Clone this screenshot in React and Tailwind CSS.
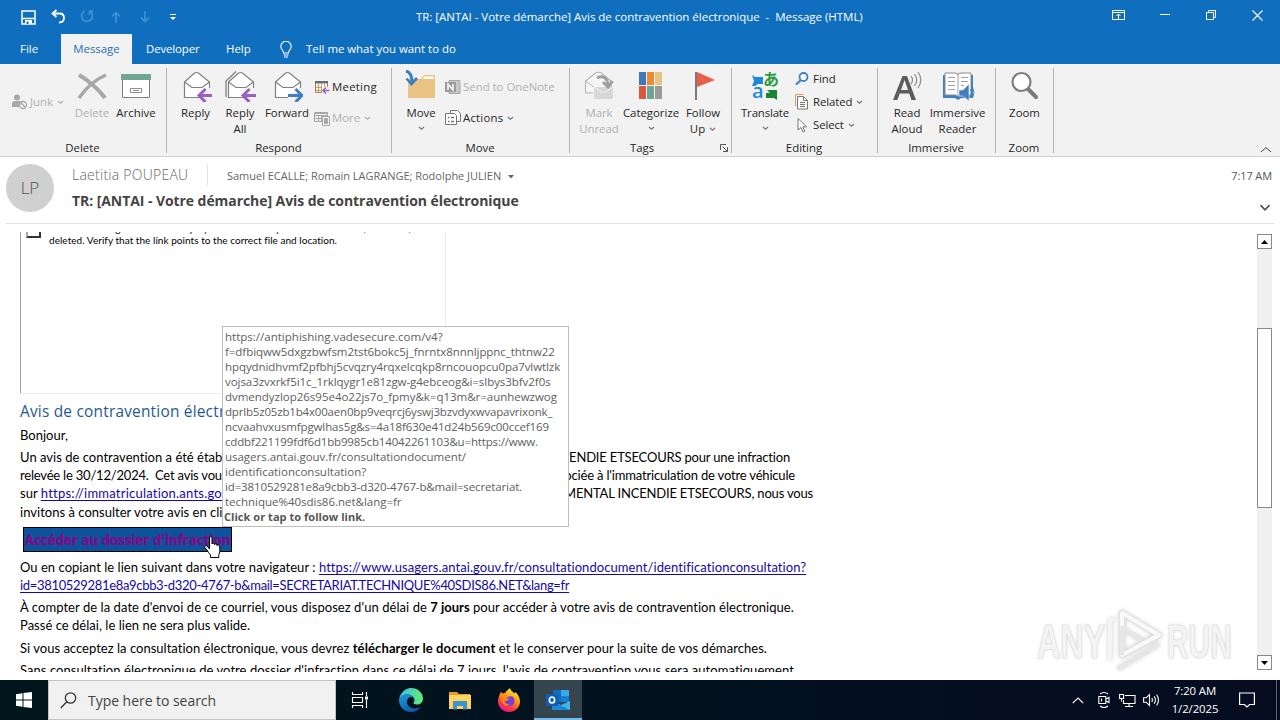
import React from "react";

const Chevron = ({ className = "" }) => (
    <svg width="7" height="5" viewBox="0 0 7 5" className={className} fill="none" stroke="currentColor" strokeWidth="1.2">
        <path d="M1 1l2.5 2.3L6 1" />
    </svg>
);

const Envelope = ({ children, back }) => (
    <svg width="32" height="32" viewBox="0 0 32 32" fill="none">
        {back && <path d="M2 24V11L12 1.5M2 11v16" stroke="#808080" strokeWidth="1.3" />}
        <path d="M4.500 12L14 3.500Q16.500 1.500 19 3.500L29.500 12V27.500H4.500Z" fill="#fff" stroke="#808080" strokeWidth="1.2" />
        <path d="M4.500 12L12 17.500H22L29.500 12" stroke="#808080" strokeWidth="1.2" />
        {children}
    </svg>
);

const PurpleArrow = () => (
    <>
        <path d="M18 25.500L25 18h7v12H22z" fill="#f2f2f2" />
        <path d="M32 25.500H19.500M25.500 19l-6.500 6.500 6.500 6.500" stroke="#9b5fc0" strokeWidth="3" />
    </>
);

const DeleteIcon = () => (
    <svg width="32" height="32" viewBox="0 0 32 32" fill="none" stroke="#a8a8a8">
        <path d="M3 5C10 9 22 18 29 28" strokeWidth="4" />
        <path d="M30 5C20 9 10 18 3 28" strokeWidth="3.500" />
    </svg>
);

const ArchiveIcon = () => (
    <svg width="32" height="32" viewBox="0 0 32 32">
        <path d="M2.500 8h27v19.500h-27z" fill="#fff" stroke="#808080" />
        <path d="M1 4h30v6H1z" fill="#6fa594" />
        <path d="M10.500 18.500h11v4h-11z" fill="#fff" stroke="#909090" />
        <path d="M13 20.500h6" stroke="#909090" />
    </svg>
);

const MoveIcon = () => (
    <svg width="32" height="32" viewBox="0 0 32 32" fill="none">
        <path d="M3 9h13l3-4h11v23H3z" fill="#eac282" />
        <path d="M19 6.500h9.500V9H18z" fill="#fff" />
        <path d="M1 1c4 1 6 4 6 11" stroke="#3f7fc1" strokeWidth="3" />
        <path d="M1.500 8.500L6.500 14l5.500-6" stroke="#3f7fc1" strokeWidth="2.600" />
    </svg>
);

const MarkUnreadIcon = () => (
    <svg width="32" height="32" viewBox="0 0 32 32" fill="none">
        <path d="M2.500 23V11l10-8q3-1.500 6 0L28 11v10" fill="#f5f5f5" stroke="#b5b5b5" strokeWidth="1.200" />
        <path d="M2.500 11l9 6.500M2.500 23H10" stroke="#b5b5b5" />
        <path d="M11 17h19v12H11z" fill="#d8d8d8" />
        <path d="M11 17l9.500 6 9.500-6" stroke="#f2f2f2" />
        <path d="M14 8c6-3 11 0 11 8M20 12l5 5 4.500-6" stroke="#a0a0a0" strokeWidth="3" />
    </svg>
);

const CategorizeIcon = () => (
    <svg width="32" height="32" viewBox="0 0 32 32">
        <path d="M4 2h7v13H4z" fill="#3f78b8" />
        <path d="M12 2h7v13h-7z" fill="#ea8b3a" />
        <path d="M20 2h7v13h-7z" fill="#eac282" />
        <path d="M4 16h7v13H4z" fill="#d9583b" />
        <path d="M12 16h7v13h-7z" fill="#6fa594" />
        <path d="M20 16h7v13h-7z" fill="#9a9a9a" />
    </svg>
);

const FlagIcon = () => (
    <svg width="32" height="32" viewBox="0 0 32 32">
        <path d="M8 2h2v28H8z" fill="#7a7a7a" />
        <path d="M10 2l18 8L10 17z" fill="#e8604a" />
    </svg>
);

const TranslateIcon = () => (
    <div className="relative w-[32px] h-[32px]">
        <svg width="32" height="32" viewBox="0 0 32 32">
            <path d="M3 5l3 2h8v7H9l-3 2H3l2-5z" fill="#1c8ad8" />
            <path d="M18 20h10v10l-3-2h-8v-5h4z" fill="#17862f" />
        </svg>
        <span className="absolute left-[3px] top-[10px] text-[20px] leading-[22px] text-[#1c8ad8] font-semibold font-['Open_Sans',sans-serif]">a</span>
        <span className="absolute left-[14px] -top-[1px] text-[16px] leading-[18px] text-[#2d9a3c] font-bold font-['Noto_Sans_CJK_JP',sans-serif]">あ</span>
    </div>
);

const ReadAloudIcon = () => (
    <svg width="32" height="32" viewBox="0 0 32 32" fill="none">
        <path d="M2 30L11.500 6h4.500l9 24h-4.500l-2.300-6.500H8.700L6.400 30zM10 20h7l-3.400-10z" fill="#5c5c5c" />
        <path d="M20 6q3 4 0 8M23.500 4q4.500 6 0 12M27 2q5.500 8 0 16" stroke="#8a8a8a" strokeWidth="1.200" />
    </svg>
);

const ReaderIcon = () => (
    <svg width="34" height="32" viewBox="0 0 34 32" fill="none">
        <path d="M2 5h30v23H20l-3 2-3-2H2z" fill="#3f7fc1" />
        <path d="M4 3h10q3 0 3 2 0-2 3-2h10v22H20q-3 0-3 2 0-2-3-2H4z" fill="#fff" stroke="#8a8a8a" />
        <path d="M17 5v21M7 7.500h7M7 11.500h7M7 15.500h7M7 19.500h7M20 7.500h7M20 11.500h7M20 15.500h3" stroke="#a0a0a0" />
        <path d="M18 20h4l6-6v17l-6-5h-4z" fill="#3f7fc1" stroke="#f2f2f2" strokeWidth=".6" />
        <path d="M29.500 19q2 3.500 0 7M31.500 17q3 5.500 0 11" stroke="#3f7fc1" />
    </svg>
);

const ZoomIcon = () => (
    <svg width="32" height="32" viewBox="0 0 32 32" fill="none">
        <path d="M19 19l8 8" stroke="#7a7a7a" strokeWidth="4" strokeLinecap="round" />
        <circle cx="12.500" cy="12" r="9" fill="#fff" stroke="#7f7f7f" strokeWidth="2.200" />
    </svg>
);

const BigButton = ({ icon, label, second, arrow, disabled, className }) => (
    <div className={`flex flex-col items-center shrink-0 pt-[6px] leading-[16px] text-center ${disabled ? "text-[#b1b1b1]" : "text-[#262626]"} ${className}`}>
        {icon}
        <span className="mt-[3px] whitespace-nowrap">{label}</span>
        {second && (
            <span className="flex items-center gap-[4px] whitespace-nowrap">
                {second}{arrow && <Chevron className="text-[#777]" />}
            </span>
        )}
        {!second && arrow && <Chevron className="mt-[5px] text-[#777]" />}
    </div>
);

const SmallButton = ({ icon, label, arrow, disabled, className = "" }) => (
    <div className={`flex items-center h-[20px] whitespace-nowrap ${disabled ? "text-[#b1b1b1]" : "text-[#262626]"} ${className}`}>
        <span className="w-[18px] shrink-0">{icon}</span>
        {label}
        {arrow && <Chevron className={disabled ? "ml-[4px] text-[#b1b1b1]" : "ml-[4px] text-[#777]"} />}
    </div>
);

const Group = ({ title, className, children, launcher }) => (
    <div className={`relative shrink-0 flex flex-col ${className}`}>
        <div className="flex h-[76px]">{children}</div>
        <div className={`h-[16px] leading-[16px] text-center text-[#262626] ${launcher ? "pr-[18px]" : "pr-[2px]"}`}>{title}</div>
        {launcher && (
            <svg width="8" height="8" viewBox="0 0 8 8" className="absolute right-[4px] bottom-[4px]" fill="none" stroke="#555">
                <path d="M.5 6V.5H6M2.500 2.500L7 7M7.500 3v4.500H3" />
            </svg>
        )}
        <div className="absolute right-0 top-[4px] w-px h-[85px] bg-[#b4b4b4]"></div>
    </div>
);

const Ribbon = () => (
    <div className="flex relative h-[93px] bg-[#f2f2f2] border-b border-[#cfcfcf] text-[11.4px]">
        <Group title="Delete" className="w-[167px]">
            <SmallButton className="ml-[12px] mt-[28px] w-[58px]" disabled arrow label="Junk" icon={
                <svg width="16" height="16" viewBox="0 0 16 16" fill="none">
                    <circle cx="5" cy="3.500" r="3" fill="#a8a8a8" />
                    <path d="M0 13V10q0-3 3-3h4q2 0 2.500 1L7 13z" fill="#a8a8a8" />
                    <circle cx="11" cy="11" r="3.500" fill="#f2f2f2" stroke="#a8a8a8" strokeWidth="1.300" />
                    <path d="M8.500 8.500l5 5" stroke="#a8a8a8" strokeWidth="1.300" />
                </svg>
            } />
            <BigButton className="w-[44px]" disabled icon={<DeleteIcon />} label="Delete" />
            <BigButton className="w-[44px]" icon={<ArchiveIcon />} label="Archive" />
        </Group>
        <Group title="Respond" className="w-[225px]">
            <BigButton className="ml-[6px] w-[45px]" icon={<Envelope><PurpleArrow /></Envelope>} label="Reply" />
            <BigButton className="w-[44px]" icon={<Envelope back><PurpleArrow /></Envelope>} label="Reply" second="All" />
            <BigButton className="w-[50px]" icon={
                <Envelope>
                    <path d="M17 23h8l-1-5h6l2 7-2 5H17z" fill="#f2f2f2" />
                    <path d="M17 25.500H30M24.500 19l6.500 6.500-6.500 6.500" stroke="#3f7fc1" strokeWidth="3" />
                </Envelope>
            } label="Forward" />
            <div className="ml-[2px] mt-[13px] flex flex-col gap-[11px]">
                <SmallButton className="tracking-[0.25px]" label="Meeting" icon={
                    <svg width="16" height="16" viewBox="0 0 16 16" fill="none">
                        <path d="M1.500 3.500h12v10h-12z" fill="#fff" stroke="#b08050" />
                        <path d="M1 2h13v2.500H1z" fill="#6b6b6b" />
                        <path d="M4.500 5v8M7.500 5v8M10.500 5v3M2 8.500h11M2 11.500h6" stroke="#d29a5a" />
                        <path d="M8 8h8v8H8z" fill="#f2f2f2" />
                        <path d="M15.500 11.500H9.500M12 8.500l-3 3 3 3" stroke="#9b5fc0" strokeWidth="1.600" />
                    </svg>
                } />
                <SmallButton disabled arrow label="More" icon={
                    <svg width="17" height="16" viewBox="0 0 17 16" fill="none" stroke="#a8a8a8">
                        <path d="M.5 2.500h13v9H.5zM.5 5.500h13M4.500 5v6M7.500 5v6M1 8.500h8" />
                        <path d="M1 2h12v2H1z" fill="#a8a8a8" stroke="none" />
                        <path d="M8.500 6.500h7v9h-7z" fill="#f2f2f2" />
                        <path d="M10.500 8.500h3v5h-3z" fill="#a8a8a8" />
                    </svg>
                } />
            </div>
        </Group>
        <Group title="Move" className="w-[178px]">
            <BigButton className="ml-[7px] w-[44px]" arrow icon={<MoveIcon />} label="Move" />
            <div className="ml-[2px] mt-[13px] flex flex-col gap-[11px]">
                <SmallButton disabled label="Send to OneNote" icon={
                    <svg width="16" height="16" viewBox="0 0 16 16" fill="none">
                        <path d="M4 1.500h11v13H4z" fill="#c8c8c8" stroke="#a8a8a8" />
                        <path d="M0 3h11v10H0z" fill="#9a9a9a" />
                        <path d="M3 11V5l5 6V5" stroke="#fff" strokeWidth="1.500" />
                    </svg>
                } />
                <SmallButton className="tracking-[0.2px]" arrow label="Actions" icon={
                    <svg width="17" height="16" viewBox="0 0 17 16" fill="none" stroke="#777">
                        <path d="M5.500 3V.5h7l3 3v8H12" fill="#fff" />
                        <path d="M.5 3.500h9l2 2v9H.5z" fill="#fff" />
                        <path d="M3 7.500h1.500M6 7.500h3M3 11.500h1.500M6 11.500h3" strokeWidth="1.500" />
                    </svg>
                } />
            </div>
        </Group>
        <Group title="Tags" className="w-[162px]" launcher>
            <BigButton className="ml-[5px] w-[48px]" disabled icon={<MarkUnreadIcon />} label="Mark" second="Unread" />
            <BigButton className="w-[56px]" arrow icon={<CategorizeIcon />} label="Categorize" />
            <BigButton className="w-[48px]" arrow icon={<FlagIcon />} label="Follow" second="Up" />
        </Group>
        <Group title="Editing" className="w-[146px]">
            <BigButton className="ml-[7px] w-[52px] tracking-[-0.15px]" arrow icon={<TranslateIcon />} label="Translate" />
            <div className="ml-[4px] mt-[5px] flex flex-col gap-[3px]">
                <SmallButton label="Find" icon={
                    <svg width="14" height="16" viewBox="0 0 14 16" fill="none" stroke="#3f7fc1">
                        <circle cx="8.500" cy="6" r="4" strokeWidth="1.800" fill="#fff" />
                        <path d="M5.500 9.500L1 13.500" strokeWidth="2.200" />
                    </svg>
                } />
                <SmallButton className="tracking-[-0.1px]" arrow label="Related" icon={
                    <svg width="14" height="16" viewBox="0 0 14 16" fill="none">
                        <path d="M.5 12V.5h8" stroke="#e0a060" />
                        <path d="M2.500 2.500h6l4 4v8.500h-10z" fill="#fff" stroke="#777" />
                        <path d="M8.500 2.500v4h4M5 8.500h5M5 10.500h5M5 12.500h5" stroke="#777" />
                    </svg>
                } />
                <SmallButton className="tracking-[-0.1px]" arrow label="Select" icon={
                    <svg width="14" height="16" viewBox="0 0 14 16" fill="#fff" stroke="#777">
                        <path d="M3 1.500v11.500l3-2.500 2 4.500 1.800-.8-2-4.400h3.700z" />
                    </svg>
                } />
            </div>
        </Group>
        <Group title="Immersive" className="w-[118px]">
            <BigButton className="ml-[7px] w-[44px]" icon={<ReadAloudIcon />} label="Read" second="Aloud" />
            <BigButton className="w-[57px]" icon={<ReaderIcon />} label="Immersive" second="Reader" />
        </Group>
        <Group title="Zoom" className="w-[58px]">
            <BigButton className="w-[57px]" icon={<ZoomIcon />} label="Zoom" />
        </Group>
        <svg width="12" height="7" viewBox="0 0 12 7" className="absolute right-[8px] bottom-[3px]" fill="none" stroke="#444">
            <path d="M1 6l5-4.500L11 6" />
        </svg>
    </div>
);

const TitleBar = () => (
    <div className="relative flex items-center h-[34px] text-white">
        <svg width="15" height="15" viewBox="0 0 15 15" className="ml-[21px]" fill="none" stroke="#fff" strokeWidth="1.500">
            <path d="M1 1h13v13H1zM1 8.500h13" />
            <path d="M4 10h7v4H4z" fill="#fff" stroke="none" />
            <path d="M5.500 11.500h2V14h-2z" fill="#106ebe" stroke="none" />
        </svg>
        <svg width="15" height="15" viewBox="0 0 15 15" className="ml-[15px] mb-[2px]" fill="none" stroke="#fff" strokeWidth="1.800">
            <path d="M5.500 1L1.500 4.500 5.500 8M2 4.500h6.500q4.500 0 4.500 4.500t-5 4.500" />
        </svg>
        <svg width="14" height="14" viewBox="0 0 14 14" className="ml-[14px] mb-[2px]" fill="none" stroke="#3d92d8" strokeWidth="1.700">
            <path d="M4.500 2A5.500 5.500 0 1 0 10 2.300M9.500 6V2H13.500" />
        </svg>
        <svg width="10" height="12" viewBox="0 0 10 12" className="ml-[17px] mb-px" fill="none" stroke="#3d92d8" strokeWidth="1.700">
            <path d="M5 12V1.500M1 5.500l4-4 4 4" />
        </svg>
        <svg width="10" height="12" viewBox="0 0 10 12" className="ml-[19px] mb-px" fill="none" stroke="#3d92d8" strokeWidth="1.700">
            <path d="M5 0v10.500M1 6.500l4 4 4-4" />
        </svg>
        <svg width="6" height="7" viewBox="0 0 6 7" className="ml-[20px]">
            <path d="M0 0h6v1H0zM0 3h6L3 6z" fill="#fff" />
        </svg>
        <span className="ml-[240px] text-[11.5px] tracking-[-0.02px] whitespace-pre">TR: [ANTAI - Votre démarche] Avis de contravention électronique  -  Message (HTML)</span>
        <div className="ml-auto flex items-center pr-[17px] pb-[4px]">
            <svg width="13" height="10" viewBox="0 0 13 10" fill="none" stroke="#fff">
                <path d="M.5.500h12v9H.5zM.5 2.500h12M6.500 9V4.500M4.500 6l2-2 2 2" />
            </svg>
            <svg width="10" height="10" viewBox="0 0 10 10" className="ml-[35px]" stroke="#fff"><path d="M0 4.500h10" /></svg>
            <svg width="10" height="10" viewBox="0 0 10 10" className="ml-[36px]" fill="none" stroke="#fff">
                <path d="M.5 2.500h7v7h-7zM2.500 2V.5h7v7H8" />
            </svg>
            <svg width="11" height="11" viewBox="0 0 11 11" className="ml-[36px]" stroke="#fff" strokeWidth="1.100"><path d="M.5.500l10 10M10.500.500l-10 10" /></svg>
        </div>
    </div>
);

const Tabs = () => (
    <div className="flex h-[30px] items-center text-white text-[11.4px]">
        <span className="w-[61px] pl-[20px]">File</span>
        <span className="w-[71px] h-[30px] leading-[30px] text-center bg-[#f2f2f2] text-[#2a6fb5]">Message</span>
        <span className="w-[94px] pl-[14px] tracking-[-0.1px]">Developer</span>
        <span className="w-[54px]">Help</span>
        <svg width="12" height="17" viewBox="0 0 12 17" fill="none" stroke="#fff" strokeWidth="1.100">
            <path d="M3.500 12c0-3-2.700-3.500-2.700-6.500a5.200 5.200 0 0 1 10.400 0c0 3-2.700 3.500-2.700 6.500zM3.500 14h5M4 16h4" />
        </svg>
        <span className="ml-[14px]">Tell me what you want to do</span>
    </div>
);

const MessageHeader = () => (
    <div className="flex h-[67px] mx-[6px] border-b border-[#e1e1e1] relative">
        <div className="mt-[7px] w-[48px] h-[48px] rounded-full bg-[#d0d0d0] text-[#555] text-[17px] leading-[48px] text-center font-light">LP</div>
        <div className="ml-[18px] mt-[6px]">
            <div className="flex items-center h-[24px] text-[#666]">
                <span className="w-[135px] -mt-[2px] text-[14px] font-light tracking-[0.25px]">Laetitia POUPEAU</span>
                <span className="w-px h-[22px] bg-[#e4e4e4]"></span>
                <span className="ml-[19px] mt-[2px] text-[11px] tracking-[-0.02px]">Samuel ECALLE; Romain LAGRANGE; Rodolphe JULIEN</span>
                <svg width="6" height="4" viewBox="0 0 6 4" className="ml-[7px] mt-[3px]"><path d="M0 0h6L3 3.500z" fill="#666" /></svg>
            </div>
            <div className="h-[28px] leading-[28px] text-[14px] font-bold tracking-[-0.07px] text-[#444]">TR: [ANTAI - Votre démarche] Avis de contravention électronique</div>
        </div>
        <div className="ml-auto mt-[11px] mr-[2px] flex flex-col items-end text-[11px] leading-[16px] text-[#555]">
            <span className="tracking-[-0.1px]">7:17 AM</span>
            <svg width="12" height="8" viewBox="0 0 12 8" className="mt-[20px] mr-px" fill="none" stroke="#555" strokeWidth="1.800"><path d="M1.500 1.200L6 5.800l4.500-4.600" /></svg>
        </div>
    </div>
);

const Link = ({ children, className = "" }) => (
    <span className={`text-[#1508a8] underline underline-offset-[2px] decoration-1 ${className}`}>{children}</span>
);

// left part, right part, line width and height, left tracking
const paragraph = [
    ["Un avis de contravention a été établi", "INCENDIE ETSECOURS pour une infraction", "w-[770px]", "tracking-[0.02px]"],
    ["relevée le 30/12/2024.  Cet avis vous est", "associée à l'immatriculation de votre véhicule", "w-[775px]", "tracking-[-0.2px]"],
    ["sur ", "DEPARTEMENTAL INCENDIE ETSECOURS, nous vous", "w-[793px] h-[19px]", "tracking-[0.03px]"],
    ["invitons à consulter votre avis en cliquant ici :", "", "w-[793px]", "tracking-[0.02px]"],
];

const MailBody = () => (
    <div className="mt-[8px] h-[440px] w-[1257px] overflow-hidden pl-[20px] font-['Lato',sans-serif] text-[13px] leading-[18px] text-black whitespace-pre">
        <div className="w-[426px] h-[162px] border-l border-l-[#a0a0a0] border-r border-r-[#ececec] border-b border-b-[#ececec] overflow-hidden flex">
            <div className="ml-[5px] w-[15px] h-[6px] border-2 border-t-0 border-[#333] border-l-[#aaa]"></div>
            <div className="ml-[8px] -mt-[10px] text-[10px] leading-[12px] tracking-[0.04px]">
                <div className="tracking-[0.2px]">The linked image cannot be displayed. The file may have been moved, renamed, or</div>
                <div>deleted. Verify that the link points to the correct file and location.</div>
            </div>
        </div>
        <div className="mt-[6px] h-[24px] leading-[24px] text-[15.4px] tracking-[0.22px] text-[#1f5a94] font-['Open_Sans',sans-serif]">Avis de contravention électronique</div>
        <div className="mt-[2px]">Bonjour,</div>
        <div className="mt-[4px]">
            {paragraph.map(([left, right, size, tracking], i) => (
                <div key={i} className={`flex justify-between ${size} ${tracking}`}>
                    <span>{left}{i === 2 && <Link className="tracking-[0.22px]">https://immatriculation.ants.gouv.fr</Link>}</span>
                    <span className="tracking-[-0.18px]">{right}</span>
                </div>
            ))}
        </div>
        <div className="mt-[6px] ml-[3px] w-[209px] h-[25px] border border-black bg-[#0d539c] pl-px leading-[24px] text-[13.3px] font-bold text-[#7d0c85] font-['Open_Sans',sans-serif] [-webkit-text-stroke:0.4px_#7d0c85]">Accéder au dossier d'infraction</div>
        <div className="mt-[6px]">
            <div><span className="tracking-[0.03px]">Ou en copiant le lien suivant dans votre navigateur : </span><Link className="tracking-[0.08px]">https://www.usagers.antai.gouv.fr/consultationdocument/identificationconsultation?</Link></div>
            <Link className="tracking-[-0.32px]">id=3810529281e8a9cbb3-d320-4767-b&mail=SECRETARIAT.TECHNIQUE%40SDIS86.NET&lang=fr</Link>
        </div>
        <div className="mt-[4px]">
            <div><span className="tracking-[0.06px]">À compter de la date d'envoi de ce courriel, vous disposez d'un délai de </span><b>7 jours</b><span className="tracking-[0.03px]"> pour accéder à votre avis de contravention électronique.</span></div>
            <div className="tracking-[0.03px]">Passé ce délai, le lien ne sera plus valide.</div>
        </div>
        <div className="mt-[5px] tracking-[0.02px]">Si vous acceptez la consultation électronique, vous devrez <b className="tracking-[0.12px]">télécharger le document</b><span className="tracking-[0.06px]"> et le conserver pour la suite de vos démarches.</span></div>
        <div className="mt-[4px] tracking-[0.05px]">Sans consultation électronique de votre dossier d'infraction dans ce délai de 7 jours, l'avis de contravention vous sera automatiquement</div>
    </div>
);

const ScrollBar = () => (
    <div className="mt-[10px] w-[15px] h-[436px] bg-[#f0f0f0] flex flex-col justify-between">
        <div className="h-[15px] border border-[#888] bg-white flex items-center justify-center">
            <svg width="7" height="4" viewBox="0 0 7 4"><path d="M0 4h7L3.500 0z" /></svg>
        </div>
        <div className="h-[180px] -mt-[68px] border border-[#888] bg-white"></div>
        <div className="h-[15px] border border-[#888] bg-white flex items-center justify-center">
            <svg width="7" height="4" viewBox="0 0 7 4"><path d="M0 0h7L3.500 4z" /></svg>
        </div>
    </div>
);

const tipLines = [
    ["https://antiphishing.vadesecure.com/v4?", "tracking-[0.01px]"],
    ["f=dfbiqww5dxgzbwfsm2tst6bokc5j_fnrntx8nnnljppnc_thtnw22", "tracking-[-0.05px]"],
    ["hpqydnidhvmf2pfbhj5cvqzry4rqxelcqkp8rncouopcu0pa7vlwtlzk", "tracking-[-0.08px]"],
    ["vojsa3zvxrkf5i1c_1rklqygr1e81zgw-g4ebceog&i=slbys3bfv2f0s", "tracking-[-0.05px]"],
    ["dvmendyzlop26s95e4o22js7o_fpmy&k=q13m&r=aunhewzwog", "tracking-[-0.02px]"],
    ["dprlb5z05zb1b4x00aen0bp9veqrcj6yswj3bzvdyxwvapavrixonk_", "tracking-[-0.18px]"],
    ["ncvaahvxusmfpgwlhas5g&s=4a18f630e41d24b569c00ccef169", "tracking-[-0.12px]"],
    ["cddbf221199fdf6d1bb9985cb14042261103&u=https://www.", "tracking-[-0.16px]"],
    ["usagers.antai.gouv.fr/consultationdocument/", "tracking-[-0.02px]"],
    ["identificationconsultation?", "tracking-[-0.01px]"],
    ["id=3810529281e8a9cbb3-d320-4767-b&mail=secretariat.", "tracking-[-0.13px]"],
    ["technique%40sdis86.net&lang=fr", "tracking-[-0.02px]"],
];

const Tooltip = () => (
    <div className="absolute left-[222px] top-[326px] w-[347px] h-[201px] border border-[#bdbdbd] bg-white pl-[2px] pt-[2px] text-[11.5px] leading-[15px] text-[#5e5e5e] whitespace-nowrap">
        {tipLines.map(([text, tracking]) => <div key={text} className={tracking}>{text}</div>)}
        <div className="-ml-px text-[11px] tracking-[0.04px] font-bold text-[#555]">Click or tap to follow link.</div>
    </div>
);

const Watermark = () => (
    <div className="absolute left-[1037px] top-[608px] w-[200px] h-[64px] font-['Liberation_Sans',sans-serif] font-bold text-[49px] leading-[67px] text-[#f4f4f4] [-webkit-text-stroke:0.6px_#dedede] [text-shadow:0_0_4px_#d4d4d4]">
        <span className="absolute left-0 top-0 origin-left scale-x-[0.66]">ANY</span>
        <span className="absolute left-[130px] top-0 origin-left scale-x-[0.61]">RUN</span>
        <svg width="60" height="66" viewBox="0 0 60 66" className="absolute left-[68px] top-0 drop-shadow-[0_0_2px_#ccc]" fill="none" strokeLinejoin="round">
            <path d="M5 52V13l5-3" stroke="#f4f4f4" strokeWidth="4" />
            <path d="M17 5L54 27 17 47z" stroke="#e2e2e2" strokeWidth="6" />
            <path d="M17 5L54 27 17 47z" stroke="#f9f9f9" strokeWidth="4" />
            <path d="M13 61L54 36M17 47V20l20 12" stroke="#e6e6e6" strokeWidth="4" />
        </svg>
    </div>
);

const HandCursor = () => (
    <svg width="17" height="22" viewBox="0 0 17 22" className="absolute left-[204px] top-[536px]" fill="#fff" stroke="#000">
        <path d="M5.500 13V2q0-1.500 1.200-1.500T8 2v6q0-1 1.300-.8T10.500 8.500q.2-1 1.500-.6t1.200 1.600q.3-.9 1.400-.5T15.800 11v4.500q0 1.500-1 3v3H6.500V19Q4.500 17 3 14L.8 11.500q-.4-1.500.7-1.800T4 11z" />
    </svg>
);

const Taskbar = () => (
    <div className="flex items-center h-[40px] bg-linear-to-r from-[#00161d] to-[#050c20] text-white">
        <div className="w-[48px] flex justify-center">
            <svg width="16" height="16" viewBox="0 0 16 16" fill="#fff">
                <path d="M0 2.200L6.500 1.300V7.500H0zM7.500 1.100L16 0v7.500H7.500zM0 8.500h6.500v6.200L0 13.800zM7.500 8.500H16V16l-8.500-1.100z" />
            </svg>
        </div>
        <div className="w-[288px] h-[40px] flex items-center bg-[#f1f1f1] border border-[#c4c4c4] text-[#444]">
            <svg width="17" height="17" viewBox="0 0 17 17" className="ml-[11px]" fill="none" stroke="#333" strokeWidth="1.300">
                <circle cx="10.500" cy="6" r="5.200" /><path d="M6.800 9.700L.8 16" />
            </svg>
            <span className="ml-[11px] text-[14px] tracking-[-0.04px]">Type here to search</span>
        </div>
        <div className="w-[50px] flex justify-center">
            <svg width="18" height="16" viewBox="0 0 18 16" fill="none" stroke="#fff" strokeWidth="1.100" className="ml-[-2px]">
                <path d="M1.500 0v2.500h10V0M1.500 16v-2.500h10V16M1.500 5.500h10v5h-10zM15.500 0v4M15.500 8v8" />
                <path d="M14 4.500h3v3h-3z" fill="#fff" stroke="none" />
            </svg>
        </div>
        <div className="w-[50px] flex justify-center">
            <svg width="24" height="24" viewBox="0 0 24 24">
                <defs>
                    <linearGradient id="edgeTop" x1="0" x2="1"><stop offset="0" stopColor="#35c1f1" /><stop offset="1" stopColor="#66eb6e" /></linearGradient>
                    <linearGradient id="edgeLow" x1="0" y1="0" x2=".6" y2="1"><stop offset="0" stopColor="#1b9de2" /><stop offset="1" stopColor="#0c59a4" /></linearGradient>
                </defs>
                <path d="M0 12C1 5 6 0 12 0c7 0 12 5 12 10.500 0 4-3 6-6 6-2.500 0-4-1-3.500-2 .5-.6 1-1.300 1-2.500C15.500 9 12 6.500 8 6.500S1 9 0 12z" fill="url(#edgeTop)" />
                <path d="M0 12c1-4 4-5.500 8-5.500 4 0 7.500 2.500 7.500 5.500 0-1.800-1.500-3-3.500-3-2.500 0-4 2.500-4 5 0 4 4 6.500 8 6.500 2 0 4-.8 5.500-1.500C19 22.500 16 24 12 24 5 24 0 18.500 0 12z" fill="url(#edgeLow)" />
            </svg>
        </div>
        <div className="w-[48px] flex justify-center">
            <svg width="22" height="19" viewBox="0 0 22 19">
                <path d="M0 1h8l2 2h11v4H0z" fill="#e6a023" />
                <path d="M0 4h22v14H0z" fill="#fcd462" />
                <path d="M4 11q0-1 1-1h12q1 0 1 1v7.500h-4V15H8v3.500H4z" fill="#3b93d4" />
            </svg>
        </div>
        <div className="w-[50px] flex justify-center">
            <svg width="24" height="24" viewBox="0 0 24 24">
                <defs>
                    <linearGradient id="fox" x1=".8" y1="0" x2=".3" y2="1"><stop offset="0" stopColor="#fff14f" /><stop offset=".45" stopColor="#ff980e" /><stop offset=".75" stopColor="#ff3647" /><stop offset="1" stopColor="#e31587" /></linearGradient>
                </defs>
                <path d="M1 13C1 9 3 6 4 3.500c.5 1 .8 1.500 1.500 2L8 5c1-2 3-3 5-5 .5 2.500 3 4 4.500 5.500L18 4c3 2 5 6 5 9.500C23 19.500 18 24 12 24S1 19.500 1 13z" fill="url(#fox)" />
                <path d="M12 8.500c4-1 6 2 5.500 5-.5 3.500-3 5-6 4.500S7 15 7.500 12c1 1 2.500.8 3.500 0s-1-1.500-2-1.500c.5-1 1.500-1.500 3-2z" fill="#7a3fd0" />
                <path d="M4 8c2-2 4-1.500 6-.5-2 .5-2.500 1.500-2 2.500 1 .8 3 .3 4 .8-1 2.200-3.500 2.200-5 1.700C8 15 10 17 13 16.500c-4 3-9 0-9-8.500z" fill="#ff8a16" />
            </svg>
        </div>
        <div className="w-[48px] h-[40px] flex items-center justify-center bg-[#34454d] border-b-2 border-[#76b9ed]">
            <svg width="24" height="22" viewBox="0 0 24 22" className="mt-px">
                <path d="M7 1h16v12H7z" fill="#0f6cbd" />
                <path d="M15 1h8v6h-8z" fill="#37a6ea" />
                <path d="M15 7h8v6h-8z" fill="#1681d4" />
                <path d="M6 12l9 4 9-4v9H6z" fill="#41b4ef" />
                <path d="M6 12l18 9H6z" fill="#1d86d6" />
                <path d="M0 5h12v12H0z" fill="#0a5fb4" />
                <ellipse cx="6" cy="11" rx="2.600" ry="3" fill="none" stroke="#fff" strokeWidth="1.700" />
            </svg>
        </div>
        <div className="ml-auto flex items-center">
            <svg width="12" height="7" viewBox="0 0 12 7" fill="none" stroke="#fff" strokeWidth="1.200"><path d="M.8 6.200L6 1l5.200 5.200" /></svg>
            <svg width="12" height="18" viewBox="0 0 12 18" className="ml-[14px]" fill="none" stroke="#fff" strokeWidth="1.100">
                <path d="M.8 5.500h7v7h-7zM8 8l3-1.500v5L8 10M2 3q4-3 8 0M2 15q4 3 8 0M3.500 7.500v3" />
            </svg>
            <svg width="17" height="15" viewBox="0 0 17 15" className="ml-[9px]" fill="none" stroke="#fff" strokeWidth="1.100">
                <path d="M6 2.500h10v8H4.500V7M10 10.500v3M6 13.500h8M.6 1.500h4v4h-4zM2.500 5.500v3" />
            </svg>
            <svg width="17" height="14" viewBox="0 0 17 14" className="ml-[7px]" fill="none" stroke="#fff" strokeWidth="1.100">
                <path d="M.6 4.800h2.600L6.500 1.500v11L3.200 9.200H.6zM8.800 5q1.200 2 0 4M11.200 3.200q2.400 3.800 0 7.600M13.600 1.500q3.800 5.500 0 11" />
            </svg>
            <div className="ml-[10px] w-[50px] text-center text-[11.4px] leading-[18px] tracking-[-0.1px]">
                <div>7:20 AM</div>
                <div>1/2/2025</div>
            </div>
            <svg width="16" height="16" viewBox="0 0 16 16" className="ml-[19px] mr-[21px]" fill="none" stroke="#fff" strokeWidth="1.200">
                <path d="M.6 1h14.800v11.500h-4.800L8 15l-2.600-2.500H.6z" />
            </svg>
            <div className="w-px h-[40px] bg-[#5b6470] mr-[3px]"></div>
        </div>
    </div>
);

export default function App() {
    return (
        <div className="relative w-[1280px] h-[720px] overflow-hidden bg-white font-['Open_Sans',sans-serif]">
            <div className="bg-[#106ebe]">
                <TitleBar />
                <Tabs />
            </div>
            <Ribbon />
            <MessageHeader />
            <div className="flex h-[456px]">
                <MailBody />
                <ScrollBar />
            </div>
            <Taskbar />
            <Tooltip />
            <HandCursor />
            <Watermark />
        </div>
    );
}
